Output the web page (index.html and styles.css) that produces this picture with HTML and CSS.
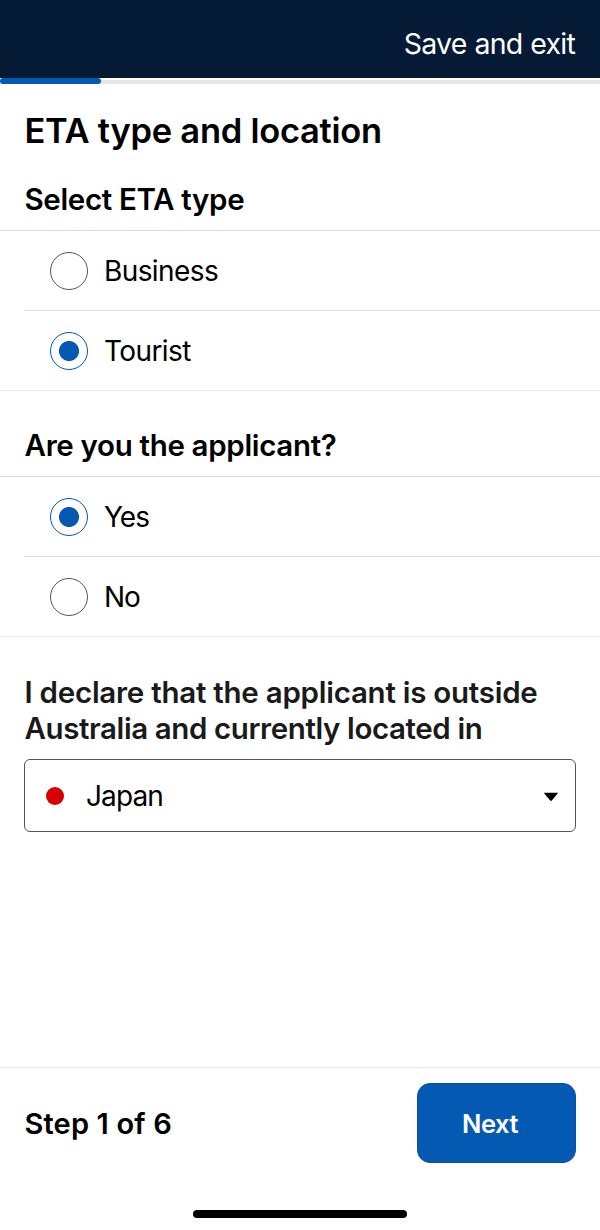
FILE: index.html
```html
<!DOCTYPE html>
<html lang="en">
<head>
    <meta charset="UTF-8">
    <meta name="viewport" content="width=device-width, initial-scale=1.0">
    <title>ETA type and location</title>
    <link rel="stylesheet" href="styles.css">
</head>
<body>
    <header class="header">
        <a class="save">Save and exit</a>
    </header>
    <div class="progress">
        <div class="progress-bar"></div>
    </div>
    <main class="content">
        <h1>ETA type and location</h1>
        <h2>Select ETA type</h2>
        <div class="options">
            <label class="option">
                <input type="radio" name="type">
                <span>Business</span>
            </label>
            <label class="option">
                <input type="radio" name="type" checked>
                <span>Tourist</span>
            </label>
        </div>
        <h2 class="applicant">Are you the applicant?</h2>
        <div class="options">
            <label class="option">
                <input type="radio" name="applicant" checked>
                <span class="short">Yes</span>
            </label>
            <label class="option">
                <input type="radio" name="applicant">
                <span class="short">No</span>
            </label>
        </div>
        <p class="declare"><span class="wide">I declare that the applicant is outside</span><br>Australia and currently located in</p>
        <div class="select">
            <span class="flag"></span>
            <span class="country">Japan</span>
            <svg class="arrow" width="16" height="10" viewBox="0 0 16 10">
                <path d="M1.6 .8H14.4Q15.4 .8 14.7 1.6L8.8 8.5Q8 9.3 7.2 8.5L1.3 1.6Q.6 .8 1.6 .8Z"/>
            </svg>
        </div>
    </main>
    <footer class="footer">
        <span class="step">Step 1 of 6</span>
        <button class="next">Next</button>
    </footer>
    <div class="home-bar"></div>
</body>
</html>
```
FILE: styles.css
```css
* {
    box-sizing: border-box;
}
body {
    margin: 0;
    height: 1230px;
    display: flex;
    flex-direction: column;
    background: #fff;
    color: #000;
    font-family: Inter, "Liberation Sans", sans-serif;
    font-size: 28px;
}
.header {
    height: 78px;
    padding: 9px 25px 0 0;
    display: flex;
    align-items: center;
    justify-content: flex-end;
    background: #051a34;
    color: #fff;
}
.save {
    font-size: 28.5px;
    letter-spacing: -0.75px;
    word-spacing: 0.5px;
}
.progress {
    height: 6px;
    background: linear-gradient(#fff 2px, #e6e6e6 2px);
}
.progress-bar {
    width: 101px;
    height: 6px;
    border-radius: 3px;
    background: #045ab3;
}
.content {
    flex: 1;
}
h1 {
    margin: 26px 24.5px 0;
    font-size: 34.5px;
    line-height: 42px;
    font-weight: 600;
    letter-spacing: -0.27px;
}
h2 {
    margin: 28px 24.5px 0;
    font-size: 29.5px;
    line-height: 38px;
    font-weight: 600;
    letter-spacing: -0.33px;
}
.applicant {
    margin-top: 35px;
}
.options {
    margin-top: 12px;
    border-top: 1px solid #d9d9d9;
    border-bottom: 1px solid #ececec;
}
.option {
    height: 79px;
    margin-left: 24px;
    padding-left: 26px;
    display: flex;
    align-items: center;
    gap: 16px;
    letter-spacing: -0.6px;
}
.option + .option {
    height: 80px;
    border-top: 1px solid #dedede;
}
.short {
    letter-spacing: -1px;
}
input {
    appearance: none;
    width: 38px;
    height: 38px;
    margin: 0;
    border: 1.5px solid #555;
    border-radius: 50%;
}
input:checked {
    border-color: #0455b5;
    background: radial-gradient(circle, #045ab3 9.6px, #fff 10.4px);
}
.declare {
    margin: 37px 24.5px 0;
    color: #1a1a1a;
    font-size: 29.5px;
    line-height: 36px;
    font-weight: 600;
    letter-spacing: -0.4px;
}
.wide {
    letter-spacing: -0.25px;
}
.select {
    height: 73px;
    margin: 13px 24.5px 0 24px;
    padding: 1px 16px 0 21px;
    display: flex;
    align-items: center;
    border: 1.5px solid #555;
    border-radius: 6px;
}
.flag {
    width: 18px;
    height: 18px;
    border-radius: 50%;
    background: #d50000;
}
.country {
    margin: 0 auto 0 22px;
    letter-spacing: -0.9px;
}
.arrow {
    margin-top: 2px;
}
.footer {
    height: 143px;
    padding: 15px 24.5px 0;
    display: flex;
    align-items: flex-start;
    justify-content: space-between;
    border-top: 1px solid #e6e6e6;
}
.step {
    margin-top: 22px;
    font-size: 29px;
    line-height: 38px;
    font-weight: 600;
    letter-spacing: 0.15px;
}
.next {
    width: 159px;
    height: 80px;
    padding: 0 12px 0 0;
    border: 1.5px solid #0450a8;
    border-radius: 13px;
    background: #045ab3;
    color: #fff;
    font-family: inherit;
    font-size: 25.5px;
    font-weight: 600;
    letter-spacing: -0.5px;
}
.home-bar {
    width: 214px;
    height: 8px;
    margin: 0 auto 12px;
    border-radius: 4px;
    background: #000;
}
```
